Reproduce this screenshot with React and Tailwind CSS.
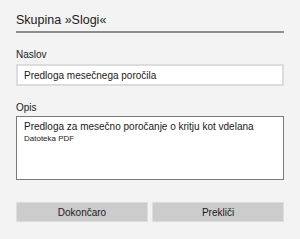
import React from 'react';

export default function App() {
  return (
    <div
      className="w-[300px] h-[239px] bg-[#f3f3f3] px-4 pt-[11px] text-[#1a1a1a]"
      style={{ fontFamily: '"Liberation Sans", Arial, sans-serif' }}
    >
      <h1 className="text-[12.5px] leading-[18px] pb-[2px]">Skupina »Slogi«</h1>
      <div className="h-[2px] bg-[#8c8c8c]" />

      <label className="block mt-[15px] text-[10px] leading-[13px]">Naslov</label>
      <div className="mt-[3px] h-[22px] bg-white border-2 border-[#dcdcdc] px-[6px] flex items-center text-[10px]">
        Predloga mesečnega poročila
      </div>

      <label className="block mt-[15px] text-[10px] leading-[13px]">Opis</label>
      <div className="mt-[2px] h-[64px] bg-white border border-[#7a7a7a] px-[7px] pt-[3px]">
        <div className="text-[10px] leading-[14px]">Predloga za mesečno poročanje o kritju kot vdelana</div>
        <div className="text-[8px] leading-[10px]">Datoteka PDF</div>
      </div>

      <div className="mt-[22px] flex gap-[4px]">
        <button className="flex-1 h-[20px] bg-[#cccccc] border border-[#dedede] text-[10px]">Dokončaro</button>
        <button className="flex-1 h-[20px] bg-[#cccccc] border border-[#dedede] text-[10px]">Prekliči</button>
      </div>
    </div>
  );
}
